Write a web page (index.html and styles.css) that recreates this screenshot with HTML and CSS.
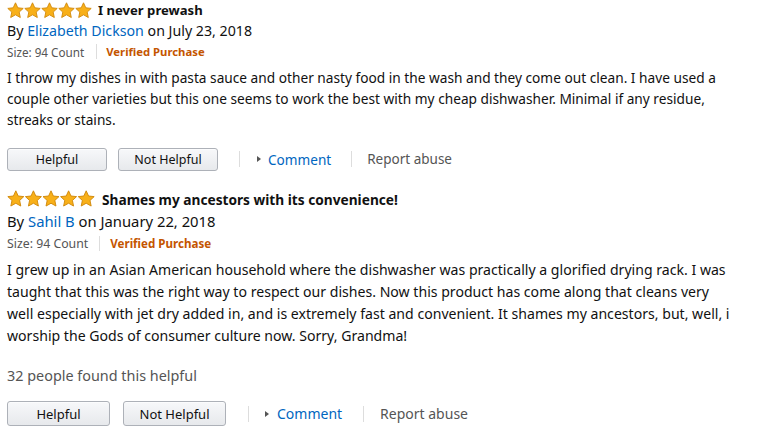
FILE: index.html
```html
<!DOCTYPE html>
<html>
<head>
<meta charset="utf-8">
<link rel="stylesheet" href="styles.css">
</head>
<body>
<div class="page">
  <section class="review r1">
    <div class="head">
      <span class="stars">
        <svg viewBox="0 0 85 17" width="85" height="17"><defs><path id="st" d="M8.5 0.8 L10.8 5.8 L16.2 6.4 L12.2 10.1 L13.3 15.5 L8.5 12.8 L3.7 15.5 L4.8 10.1 L0.8 6.4 L6.2 5.8 Z" fill="#f8b019" stroke="#d0880a" stroke-width="0.9" stroke-linejoin="round"/></defs><use href="#st" x="0"/><use href="#st" x="17"/><use href="#st" x="34"/><use href="#st" x="51"/><use href="#st" x="68"/></svg>
      </span>
      <span class="title">I never prewash</span>
    </div>
    <div class="byline">By <a class="link">Elizabeth Dickson</a> on July 23, 2018</div>
    <div class="meta"><span>Size: 94 Count</span><span class="sep"></span><span class="vp">Verified Purchase</span></div>
    <p class="body">I throw my dishes in with pasta sauce and other nasty food in the wash and they come out clean. I have used a couple other varieties but this one seems to work the best with my cheap dishwasher. Minimal if any residue, streaks or stains.</p>
    <div class="actions">
      <button class="btn">Helpful</button>
      <button class="btn">Not Helpful</button>
      <span class="vsep first"></span>
      <span class="comment"><span class="tri"></span>Comment</span>
      <span class="vsep second"></span>
      <span class="report">Report abuse</span>
    </div>
  </section>
  <section class="review r2">
    <div class="head">
      <span class="stars">
        <svg viewBox="0 0 85 17" width="88" height="17.6"><use href="#st" x="0"/><use href="#st" x="17"/><use href="#st" x="34"/><use href="#st" x="51"/><use href="#st" x="68"/></svg>
      </span>
      <span class="title">Shames my ancestors with its convenience!</span>
    </div>
    <div class="byline">By <a class="link">Sahil B</a> on January 22, 2018</div>
    <div class="meta"><span>Size: 94 Count</span><span class="sep"></span><span class="vp">Verified Purchase</span></div>
    <p class="body">I grew up in an Asian American household where the dishwasher was practically a glorified drying rack. I was taught that this was the right way to respect our dishes. Now this product has come along that cleans very well especially with jet dry added in, and is extremely fast and convenient. It shames my ancestors, but, well, i worship the Gods of consumer culture now. Sorry, Grandma!</p>
    <div class="found">32 people found this helpful</div>
    <div class="actions">
      <button class="btn">Helpful</button>
      <button class="btn">Not Helpful</button>
      <span class="vsep first"></span>
      <span class="comment"><span class="tri"></span>Comment</span>
      <span class="vsep second"></span>
      <span class="report">Report abuse</span>
    </div>
  </section>
</div>
</body>
</html>
```
FILE: styles.css
```css
* { box-sizing: border-box; }
html, body { margin: 0; padding: 0; background: #fff; }
body { font-family: "Noto Sans", "Open Sans", sans-serif; color: #111; width: 759px; height: 431px; overflow: hidden; }
.page { padding: 0 0 0 7px; }
.head { display: flex; align-items: center; height: 20px; }
.stars { display: flex; align-items: center; margin-right: 6px; }
.stars svg { display: block; }
.title { font-weight: 700; font-size: 13.1px; }
.byline { font-size: 14.2px; height: 21px; line-height: 21px; color: #111; }
.link { color: #0066c0; }
.meta { display: flex; align-items: center; font-size: 11.7px; color: #555; height: 21px; }
.sep { width: 1px; height: 15px; background: #ddd; margin: 0 9px 0 12px; }
.vp { color: #c45500; font-weight: 700; font-size: 11.3px; }
.body { margin: 5px 0 0; font-size: 13.7px; line-height: 21px; width: 745px; }
.actions { display: flex; align-items: center; }
.btn { font-family: inherit; font-size: 12.5px; color: #111; width: 100px; height: 23px; padding: 0; border: 1px solid #adb1b8; border-radius: 3px; background: linear-gradient(#f7f8fa, #e7e9ec); margin-right: 11px; box-shadow: 0 1px 0 rgba(255,255,255,.6) inset; }
.vsep { width: 1px; height: 16px; background: #ddd; }
.vsep.first { margin: 0 17px 0 10px; }
.vsep.second { margin: 0 15px 0 20px; }
.comment { display: flex; align-items: center; color: #0066c0; font-size: 13.6px; }
.tri { width: 0; height: 0; border-left: 4px solid #555; border-top: 3.5px solid transparent; border-bottom: 3.5px solid transparent; margin-right: 7px; }
.report { color: #555; font-size: 13.5px; }
.r1 .actions { margin-top: 17px; height: 24px; }
.r2 { margin-top: 18px; }
.r2 .title { font-size: 13.7px; }
.r2 .stars { margin-right: 7px; }
.r2 .byline { font-size: 14.8px; height: 22px; line-height: 22px; margin-top: 1px; }
.r2 .meta { font-size: 12.3px; height: 22px; }
.r2 .vp { font-size: 11.6px; }
.r2 .sep { margin: 0 10px 0 11px; }
.r2 .body { font-size: 14.1px; line-height: 22px; margin-top: 5px; width: 730px; }
.r2 .found { font-size: 14.4px; color: #555; margin-top: 18px; line-height: 22px; }
.r2 .actions { margin-top: 14px; height: 25px; }
.r2 .btn { width: 103px; height: 25px; font-size: 13px; margin-right: 13px; }
.r2 .vsep.first { margin: 0 16px 0 9px; }
.r2 .vsep.second { margin: 0 16px 0 21px; }
.r2 .tri { margin-right: 8px; }
.r2 .comment, .r2 .report { font-size: 14px; }
```
